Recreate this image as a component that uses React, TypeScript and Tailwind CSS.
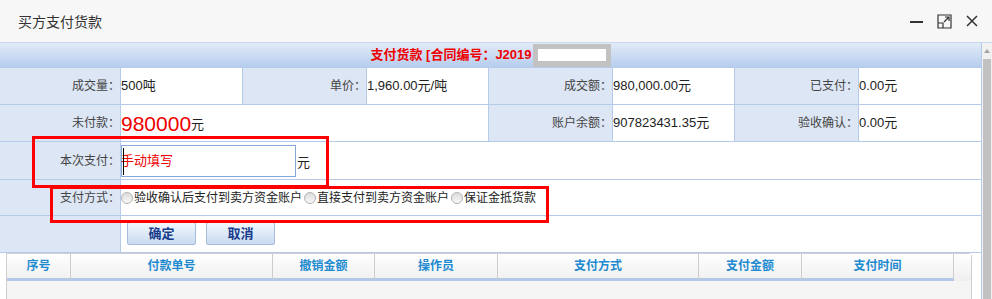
import React from 'react';

const font = { fontFamily: '"Liberation Sans", "Noto Sans CJK SC", sans-serif' };

function Label({ children, className = '' }: { children?: React.ReactNode; className?: string }) {
    return (
        <div className={`bg-[#dce6f4] border-r border-b border-[#b5cbe9] flex items-center justify-end text-[12px] text-[#444] ${className}`}>
            {children}
        </div>
    );
}

function Value({ children, className = '' }: { children?: React.ReactNode; className?: string }) {
    return (
        <div className={`bg-white border-r border-b border-[#b5cbe9] flex items-center text-[13px] text-[#222] ${className}`}>
            {children}
        </div>
    );
}

function Radio({ text }: { text: string }) {
    return (
        <span className="inline-flex items-center text-[12px]">
            <span className="w-[12px] h-[12px] rounded-full border border-[#b4b4b4] bg-gradient-to-b from-[#dcdcdc] to-[#f8f8f8]" />
            <span className="ml-[1px]">{text}</span>
        </span>
    );
}

function Btn({ text }: { text: string }) {
    return (
        <div className="w-[69px] h-[23px] rounded-[2px] border border-[#a6bcd8] bg-gradient-to-b from-[#f3f7fc] to-[#c9dbf1] flex items-center justify-center text-[13px] font-bold text-[#173c8c]">
            {text}
        </div>
    );
}

const cols = [
    { t: '序号', w: 'w-[64px]' },
    { t: '付款单号', w: 'w-[202px]' },
    { t: '撤销金额', w: 'w-[102px]' },
    { t: '操作员', w: 'w-[123px]' },
    { t: '支付方式', w: 'w-[201px]' },
    { t: '支付金额', w: 'w-[103px]' },
    { t: '支付时间', w: 'w-[152px]' },
];

export default function App() {
    return (
        <div className="relative w-[992px] h-[299px] overflow-hidden bg-white" style={font}>
            {/* Title bar */}
            <div className="h-[43px] bg-[#f7f7f7] border-b border-[#c9d9ee] flex items-center pl-[18px] pr-[13px]">
                <span className="text-[14px] text-[#333]" style={{ fontFamily: '"Noto Sans CJK SC", sans-serif' }}>买方支付货款</span>
                <div className="ml-auto flex items-center gap-[13px]">
                    <svg width="15" height="15" viewBox="0 0 15 15"><path d="M1 8h13" stroke="#333" strokeWidth="2" /></svg>
                    <svg width="15" height="15" viewBox="0 0 15 15" fill="none" stroke="#333" strokeWidth="1.2">
                        <path d="M1 1h13v13H1z" />
                        <path d="M1 9h5v5" />
                        <path d="M7 8l5-5M8 3h4v4" />
                    </svg>
                    <svg width="14" height="14" viewBox="0 0 14 14" stroke="#333" strokeWidth="1.5"><path d="M2 2l10 10M12 2L2 12" /></svg>
                </div>
            </div>

            <div className="flex">
                <div className="w-[982px]">
                    {/* Header */}
                    <div className="h-[25px] border-r border-b border-[#b5cbe9] bg-gradient-to-b from-[#e2ebf8] via-[#ccdcf3] to-[#b6cdee] flex items-center justify-center">
                        <span className="text-[13px] font-bold text-[#ee0000]">支付货款 [合同编号：J2019</span>
                        <span className="ml-[1px] w-[78px] h-[23px] bg-[#c2c2c2] flex items-center justify-center">
                            <span className="w-[68px] h-[12px] bg-white" />
                        </span>
                    </div>

                    {/* Form grid */}
                    <div className="grid grid-cols-[121px_122px_124px_122px_124px_122px_124px_123px]">
                        <Label className="h-[37px]">成交量：</Label>
                        <Value>500吨</Value>
                        <Label>单价：</Label>
                        <Value>1,960.00元/吨</Value>
                        <Label>成交额：</Label>
                        <Value>980,000.00元</Value>
                        <Label>已支付：</Label>
                        <Value>0.00元</Value>

                        <Label className="h-[37px]">未付款：</Label>
                        <Value className="col-span-3">
                            <span className="text-[21px] text-[#ee0000] leading-none">980000</span>
                            <span className="text-[13px] mt-[4px]">元</span>
                        </Value>
                        <Label>账户余额：</Label>
                        <Value>907823431.35元</Value>
                        <Label>验收确认：</Label>
                        <Value>0.00元</Value>

                        <Label className="h-[38px]">本次支付：</Label>
                        <Value className="col-span-7">
                            <div className="relative w-[175px] h-[32px] border border-[#86a9d8] flex items-center">
                                <span className="absolute left-[-1px] text-[13px] text-[#ee0000]">手动填写</span>
                                <span className="absolute left-[1px] top-[2px] w-[1px] h-[27px] bg-black" />
                            </div>
                            <span className="ml-[1px] mt-[4px]">元</span>
                        </Value>

                        <Label className="h-[36px]">支付方式：</Label>
                        <Value className="col-span-7 gap-[2px]">
                            <Radio text="验收确认后支付到卖方资金账户" />
                            <Radio text="直接支付到卖方资金账户" />
                            <Radio text="保证金抵货款" />
                        </Value>

                        <Label className="h-[37px]" />
                        <Value className="col-span-7 pl-[6px] items-start pt-[6px] gap-[10px]">
                            <Btn text="确定" />
                            <Btn text="取消" />
                        </Value>
                    </div>

                    {/* Records grid */}
                    <div className="pl-[6px] pr-[9px] border-r border-[#b5cbe9] h-[47px]">
                        <div className="h-full border-l border-r border-t border-[#cfcfcf] rounded-tr-[4px] bg-[#f5f5f5]">
                            <div className="flex h-[27px] bg-gradient-to-b from-white to-[#efefef]">
                                {cols.map((c) => (
                                    <div key={c.t} className={`${c.w} h-full border-r border-[#cccccc] border-b-[3px] border-b-[#b4c9e7] flex items-center justify-center text-[12px] font-bold text-[#1e8ad0]`}>
                                        {c.t}
                                    </div>
                                ))}
                                <div className="flex-1 h-full" />
                            </div>
                        </div>
                    </div>
                </div>

                {/* Scrollbar */}
                <div className="w-[10px] h-[256px] bg-[#f1f1f1] flex flex-col items-center">
                    <svg width="8" height="6" viewBox="0 0 8 6" className="mt-[5px]"><path d="M4 1L7 5H1z" fill="#a3a3a3" /></svg>
                    <div className="mt-[5px] w-[8px] flex-1 bg-[#c1c1c1]" />
                </div>
            </div>

            {/* Annotation boxes */}
            <div className="absolute left-[32px] top-[136px] w-[297px] h-[52px] border-[3px] border-[#ff0000]" />
            <div className="absolute left-[50px] top-[186px] w-[499px] h-[37px] border-[3px] border-[#ff0000]" />
        </div>
    );
}
